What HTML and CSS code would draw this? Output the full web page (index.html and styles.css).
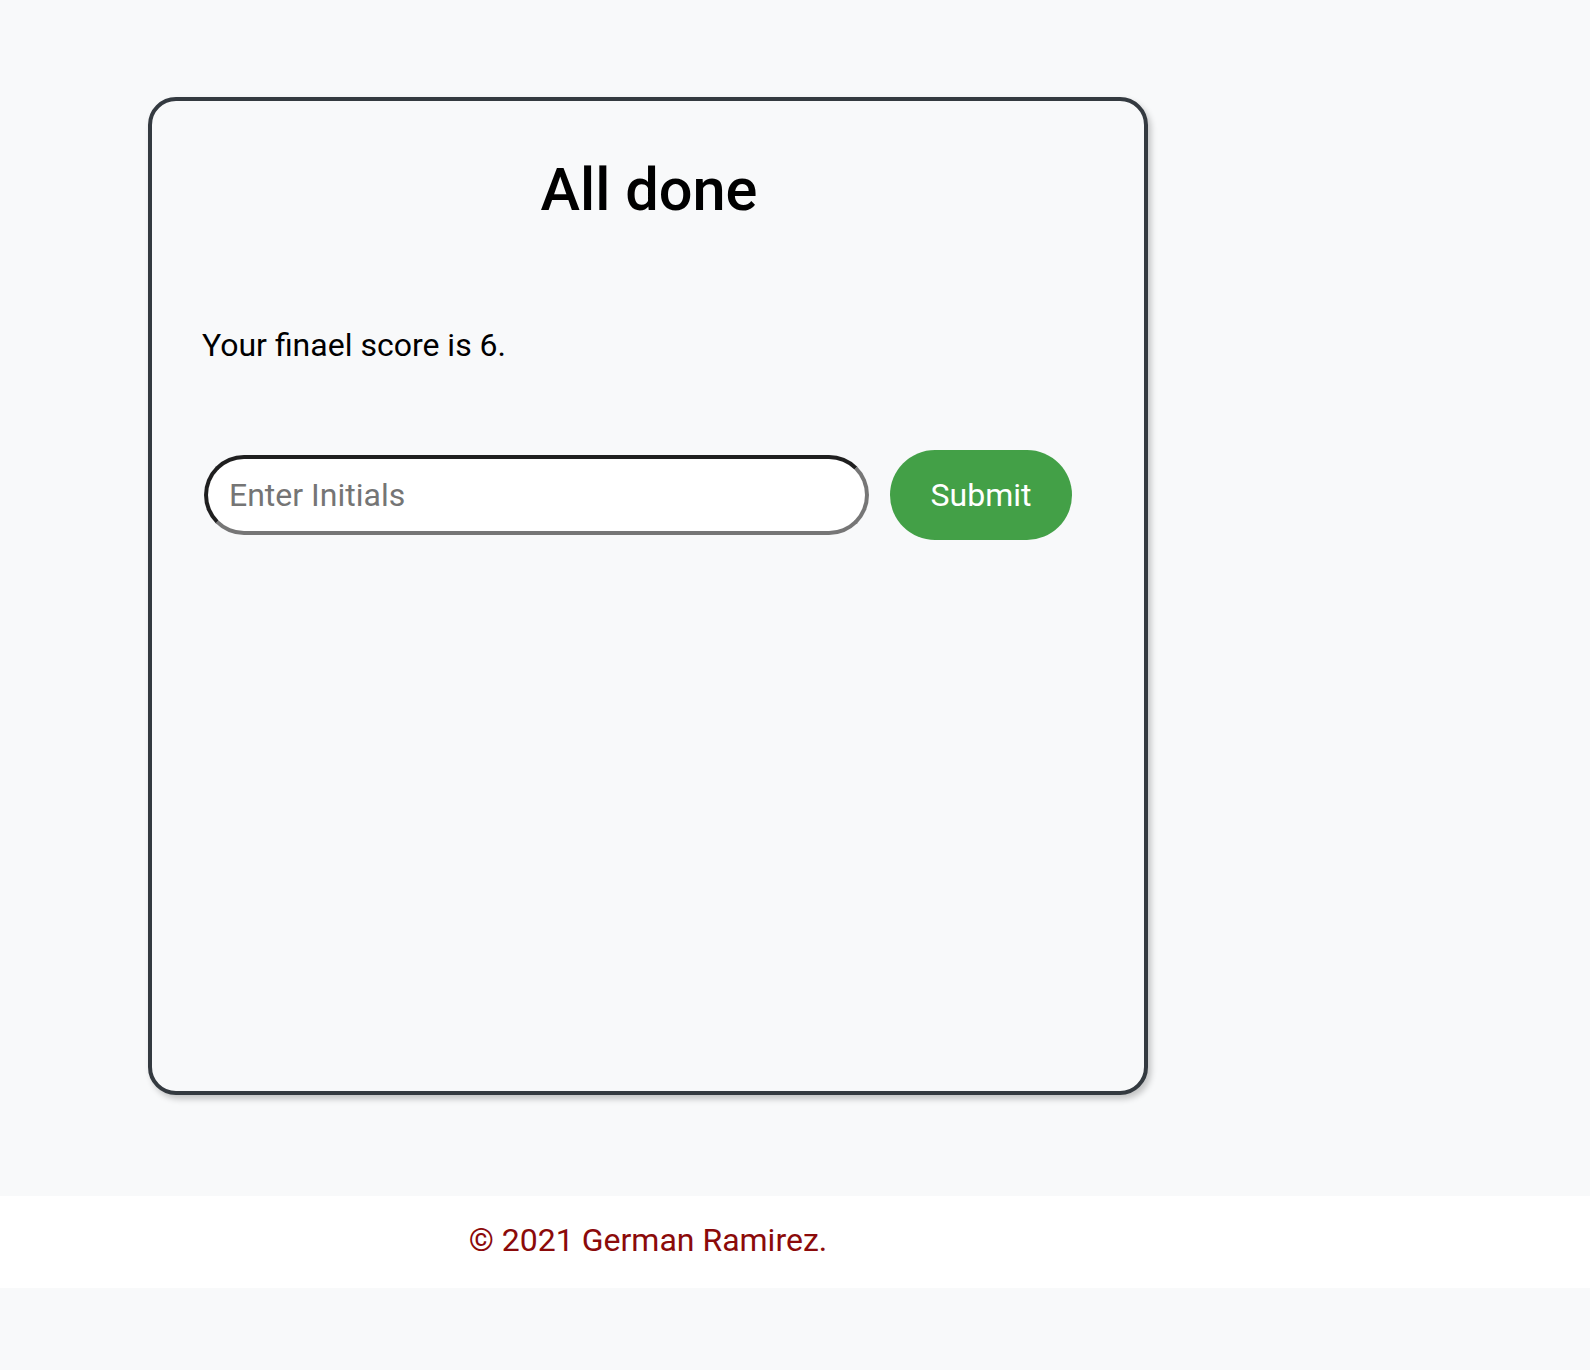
FILE: index.html
```html
<!DOCTYPE html>
<html lang="en">
<head>
<meta charset="utf-8">
<title>All done</title>
<link rel="stylesheet" href="styles.css">
</head>
<body>
<main class="page">
  <section class="card">
    <h1 class="title">All done</h1>
    <p class="score">Your finael score is 6.</p>
    <form class="entry">
      <input class="initials" type="text" placeholder="Enter Initials">
      <button class="submit" type="button">Submit</button>
    </form>
  </section>
</main>
<footer class="footer">
  <div class="footer-inner">© 2021 German Ramirez.</div>
</footer>
</body>
</html>
```

FILE: styles.css
```css
html, body {
  margin: 0;
  padding: 0;
  background: #f8f9fa;
  font-family: Roboto, "Liberation Sans", Arial, sans-serif;
  color: #000;
}

.page {
  padding: 97px 0 0 148px;
}

.card {
  box-sizing: border-box;
  width: 1000px;
  height: 998px;
  border: 4px solid #343a40;
  border-radius: 28px;
  box-shadow: 3px 4px 6px rgba(0, 0, 0, 0.22);
  padding: 53px 47px 0 49px;
  background: #f8f9fa;
}

.title {
  margin: 0;
  font-size: 59.5px;
  font-weight: 500;
  line-height: 72px;
  text-align: center;
}

.score {
  margin: 95px 0 0 1px;
  font-size: 32px;
  line-height: 48px;
}

.entry {
  display: flex;
  align-items: center;
  gap: 21px;
  margin: 81px 0 0 3px;
}

.initials {
  box-sizing: border-box;
  width: 665px;
  height: 80px;
  border: 4px solid;
  border-color: #1f1f1f #767676 #767676 #1f1f1f;
  border-radius: 40px;
  padding: 0 20px 0 21px;
  background: #fff;
  font-family: Roboto, "Liberation Sans", Arial, sans-serif;
  font-size: 32px;
  color: #000;
  outline: none;
}

.initials::placeholder {
  color: #757575;
}

.submit {
  box-sizing: border-box;
  width: 182px;
  height: 90px;
  border: none;
  border-radius: 45px;
  background: #43a047;
  color: #fff;
  font-family: Roboto, "Liberation Sans", Arial, sans-serif;
  font-size: 32px;
  padding: 0;
}

.footer {
  margin-top: 101px;
  background: #fff;
  padding: 20px 0 24px;
}

.footer-inner {
  width: 1000px;
  margin-left: 148px;
  text-align: center;
  font-size: 32px;
  line-height: 48px;
  color: #8b0a0a;
}
```
